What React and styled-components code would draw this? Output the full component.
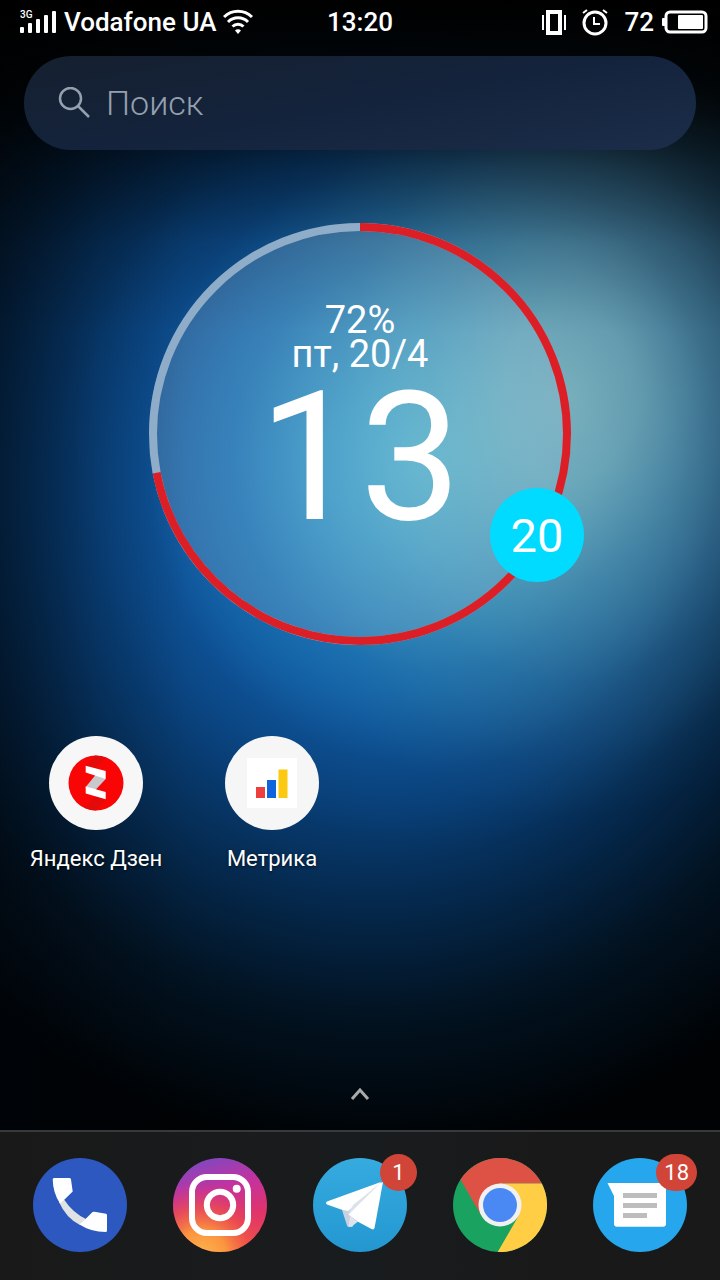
import styled, { createGlobalStyle } from "styled-components";

const GlobalStyle = createGlobalStyle`
  * {
    box-sizing: border-box;
  }

  body {
    margin: 0;
    background: #000;
    color: #fff;
    font-family: Roboto, "Liberation Sans", sans-serif;
  }
`;

const Screen = styled.div`
  display: flex;
  flex-direction: column;
  min-height: 100vh;
  background:
    linear-gradient(180deg, #000 0%, rgba(0, 0, 0, 0.8) 7%, rgba(0, 0, 0, 0.4) 13%, rgba(0, 0, 0, 0.12) 19%, transparent 26%),
    linear-gradient(90deg, rgba(0, 5, 12, 0.4) 0%, rgba(0, 5, 12, 0.12) 14%, transparent 26%),
    radial-gradient(ellipse 46% 33% at 79% 31%, rgba(148, 190, 188, 0.74) 0%, rgba(138, 184, 184, 0.68) 20%, rgba(115, 168, 172, 0.48) 42%, rgba(90, 145, 152, 0.22) 68%, rgba(80, 130, 135, 0.06) 88%, transparent 100%),
    radial-gradient(ellipse 50% 30% at 60% 36%, rgba(85, 195, 230, 0.95) 0%, rgba(65, 172, 218, 0.84) 25%, rgba(35, 132, 192, 0.55) 55%, rgba(20, 95, 165, 0.2) 80%, transparent 100%),
    radial-gradient(ellipse 86% 52% at 52% 38%, #1062b0 0%, #0d529a 30%, #083c72 49%, #042444 66%, #021220 80%, #000204 100%);
`;

const StatusBar = styled.header`
  display: grid;
  grid-template-columns: 1fr auto 1fr;
  align-items: center;
  height: 44px;
  font-size: 26px;
  font-weight: 500;
`;

const StatusGroup = styled.div`
  display: flex;
  align-items: center;
  justify-content: ${({ $end }) => ($end ? "flex-end" : "flex-start")};
  gap: ${({ $end }) => ($end ? "16px" : "7px")};
  padding: ${({ $end }) => ($end ? "0 12px 0 0" : "0 0 0 20px")};
`;

const Charge = styled.div`
  display: flex;
  align-items: center;
  gap: 8px;
`;

const SearchBar = styled.label`
  display: flex;
  align-items: center;
  gap: 16px;
  height: 94px;
  margin: 12px 24px 0;
  padding: 0 34px;
  border-radius: 47px;
  background: linear-gradient(170deg, #15202f 0%, #14233c 50%, #1b2d4a 100%);
`;

const SearchInput = styled.input`
  flex: 1;
  min-width: 0;
  padding: 0;
  border: 0;
  outline: 0;
  background: transparent;
  color: #fff;
  font: 300 34px Roboto, "Liberation Sans", sans-serif;

  &::placeholder {
    color: #95a0af;
    opacity: 1;
  }
`;

const Clock = styled.section`
  position: relative;
  display: flex;
  flex-direction: column;
  align-items: center;
  width: 422px;
  height: 422px;
  margin: 73px auto 0;
  padding-top: 80px;
  border-radius: 50%;
  background: radial-gradient(circle at 60% 50%, rgba(140, 205, 230, 0.22) 0%, rgba(150, 190, 215, 0.24) 50%, rgba(160, 180, 205, 0.27) 100%);
`;

const Ring = styled.svg`
  position: absolute;
  inset: 0;
`;

const ClockLine = styled.div`
  font-size: 38px;
  line-height: 34px;
`;

const Hours = styled.div`
  font-size: 180px;
  line-height: 174px;
`;

const Minutes = styled.div`
  position: absolute;
  right: -13px;
  bottom: 63px;
  display: flex;
  align-items: center;
  justify-content: center;
  width: 94px;
  height: 94px;
  border-radius: 50%;
  background: #00dbff;
  font-size: 47px;
`;

const AppGrid = styled.main`
  display: grid;
  grid-template-columns: repeat(4, 1fr);
  flex: 1;
  align-content: start;
  margin-top: 91px;
  padding: 0 8px;
`;

const AppLink = styled.a`
  display: flex;
  flex-direction: column;
  align-items: center;
  gap: 15px;
  color: #fff;
  font-size: 22px;
  line-height: 28px;
  text-decoration: none;
  text-shadow: 0 1px 3px rgba(0, 0, 0, 0.7);
`;

const IconBox = styled.span`
  position: relative;
  width: 94px;
  height: 94px;

  svg {
    display: block;
  }
`;

const DrawerButton = styled.button`
  align-self: center;
  display: flex;
  align-items: center;
  justify-content: center;
  width: 72px;
  height: 72px;
  padding: 0;
  border: 0;
  background: transparent;
`;

const Dock = styled.nav`
  display: grid;
  grid-template-columns: repeat(5, 1fr);
  height: 150px;
  padding: 26px 10px 0;
  border-top: 2px solid #363a3b;
  background: linear-gradient(90deg, #191919 0%, #191b1c 35%, #191c1e 50%, #191919 75%);
`;

const Badge = styled.span`
  position: absolute;
  top: -4px;
  right: -10px;
  min-width: 37px;
  height: 37px;
  padding: 0 8px;
  border-radius: 19px;
  background: #d04537;
  font-size: 22px;
  line-height: 37px;
  text-align: center;
  text-shadow: none;
`;

function SignalIcon() {
  return (
    <svg width="37" height="24" viewBox="0 0 37 24" fill="#fff">
      <text x="0" y="8" fontSize="10" fontFamily="Roboto, sans-serif">
        3G
      </text>
      <rect x="0" y="17" width="4" height="6" rx="1" />
      <rect x="8" y="13" width="4" height="10" rx="1" />
      <rect x="16" y="9" width="4" height="14" rx="1" />
      <rect x="24" y="5" width="4" height="18" rx="1" />
      <rect x="32" y="1" width="4" height="22" rx="1" />
    </svg>
  );
}

function WifiIcon() {
  return (
    <svg width="30" height="26" viewBox="0 0 30 26" fill="none" stroke="#fff" strokeWidth="3">
      <path d="M1 8a20 20 0 0 1 28 0" />
      <path d="M5 13a14 14 0 0 1 20 0" />
      <path d="M9.500 17.500a8 8 0 0 1 11 0" />
      <path d="M12 21.500a4 4 0 0 1 6 0L15 25z" fill="#fff" stroke="none" />
    </svg>
  );
}

function VibrateIcon() {
  return (
    <svg width="24" height="25" viewBox="0 0 24 25" fill="none" stroke="#fff">
      <rect x="6" y="2" width="12" height="21" strokeWidth="4" />
      <path d="M1 5v15M23 5v15" strokeWidth="2" />
    </svg>
  );
}

function AlarmIcon() {
  return (
    <svg width="26" height="27" viewBox="0 0 26 27" fill="none" stroke="#fff" strokeWidth="3">
      <circle cx="13" cy="14" r="11" />
      <path d="M12 8v7h6" strokeWidth="2" />
      <path d="M1 4l4-3M25 4l-4-3" strokeWidth="2" />
    </svg>
  );
}

function BatteryIcon() {
  return (
    <svg width="46" height="24" viewBox="0 0 46 24">
      <rect x="4" y="2" width="40" height="20" rx="4" fill="none" stroke="#fff" strokeWidth="3" />
      <rect x="0" y="8" width="4" height="8" rx="1" fill="#fff" />
      <rect x="16" y="5" width="25" height="14" rx="1" fill="#fff" />
    </svg>
  );
}

function SearchIcon() {
  return (
    <svg width="32" height="32" viewBox="0 0 32 32" fill="none" stroke="#95a0af" strokeWidth="2.500">
      <circle cx="12.500" cy="11.500" r="10.500" />
      <path d="M20 19L31 30" />
    </svg>
  );
}

function ZenIcon() {
  return (
    <svg width="94" height="94" viewBox="0 0 94 94">
      <circle cx="47" cy="47" r="47" fill="#f7f7f7" />
      <circle cx="47" cy="47" r="27.500" fill="#f90505" />
      <path d="M36.700 30L46 19.500Q52 20 57 21.500L46 32.500z" fill="#e30a0a" />
      <path d="M56.700 63L47 60.500L35 71.500Q41 74.500 47 74.500z" fill="#e30a0a" />
      <path d="M49 36L56.700 43L44.500 56L36.700 52V51z" fill="#c9c9cd" />
      <path d="M36.700 29.700L56.700 35V43L36.700 36.500z" fill="#fff" />
      <path d="M36.700 50.500L56.700 56V63.300L36.700 57.500z" fill="#fff" />
    </svg>
  );
}

function MetrikaIcon() {
  return (
    <svg width="94" height="94" viewBox="0 0 94 94">
      <circle cx="47" cy="47" r="47" fill="#f6f6f6" />
      <rect x="22" y="22" width="50" height="50" fill="#fff" />
      <rect x="31" y="51" width="9" height="11" fill="#ee3f3f" />
      <rect x="42" y="44" width="9" height="18" fill="#0f63dc" />
      <rect x="53.500" y="33.500" width="9" height="28.500" fill="#fbc90f" />
    </svg>
  );
}

function PhoneIcon() {
  return (
    <svg width="94" height="94" viewBox="0 0 94 94">
      <circle cx="47" cy="47" r="47" fill="#2d58bf" />
      <path d="M26 44L31 41.500Q40 55 53 61L47 67Q33 60 26 44z" fill="#dfe3e4" />
      <path d="M21 20H36.500Q38 20 38 21.500L39.700 33.500L31.500 41.500L27 45.500Q20 35 19.700 21.500Q19.700 20 21 20z" fill="#fff" />
      <path d="M52 61.500L59.500 54Q60.300 53.500 61.500 53.700L73 55.700Q74 56 74 57V72.500Q74 74 72.500 74Q58 74 46.500 66.500z" fill="#fff" />
    </svg>
  );
}

function InstagramIcon() {
  return (
    <svg width="94" height="94" viewBox="0 0 94 94">
      <defs>
        <linearGradient id="insta-base" x1="0.300" y1="0" x2="0.600" y2="1">
          <stop offset="0" stopColor="#7f48c0" />
          <stop offset="0.350" stopColor="#c332a0" />
          <stop offset="0.700" stopColor="#e0336a" />
          <stop offset="1" stopColor="#ee4a50" />
        </linearGradient>
        <radialGradient id="insta-glow" cx="0.300" cy="1.050" r="0.800">
          <stop offset="0" stopColor="#fdb84e" />
          <stop offset="0.350" stopColor="#fb953f" />
          <stop offset="0.650" stopColor="#f05546" stopOpacity="0.700" />
          <stop offset="1" stopColor="#e0336a" stopOpacity="0" />
        </radialGradient>
      </defs>
      <circle cx="47" cy="47" r="47" fill="url(#insta-base)" />
      <circle cx="47" cy="47" r="47" fill="url(#insta-glow)" />
      <g fill="none" stroke="#fff" strokeWidth="6">
        <rect x="19" y="19" width="56" height="56" rx="15" />
        <circle cx="47" cy="47" r="13.200" />
      </g>
      <circle cx="63.700" cy="30.700" r="4" fill="#fff" />
    </svg>
  );
}

function TelegramIcon() {
  return (
    <svg width="94" height="94" viewBox="0 0 94 94">
      <defs>
        <linearGradient id="telegram-sky" x1="0" y1="0" x2="0" y2="1">
          <stop offset="0" stopColor="#35abe0" />
          <stop offset="1" stopColor="#2497d0" />
        </linearGradient>
      </defs>
      <circle cx="47" cy="47" r="47" fill="url(#telegram-sky)" />
      <path d="M28.700 51L68 24.500L41 54L39.700 68.700H35.500Q34.300 68.700 34 67.500z" fill="#c9d0df" />
      <path d="M14 43.500L68.500 23.800L35 53L28 51.500L14 46.500Q12 45 14 43.500z" fill="#fff" />
      <path d="M70 24L61.500 70Q60.800 72.200 58.500 71L44.500 63.500L35.500 56.500L66 25.500z" fill="#fff" />
      <path d="M37 58L45 63.500L38.500 68.700H35.500z" fill="#dfe4ec" />
      <path d="M67 25.500L40 47L35 56.500z" fill="#dde2ea" />
    </svg>
  );
}

function ChromeIcon() {
  return (
    <svg width="94" height="94" viewBox="0 0 94 94">
      <circle cx="47" cy="47" r="47" fill="#1aa260" />
      <path d="M47 25.500H88.800A47 47 0 0 0 7.500 21.500L28.400 57.800L47 47z" fill="#de5246" />
      <path d="M47 25.500H88.800A47 47 0 0 1 44.700 94L65.600 57.800L47 47z" fill="#ffce44" />
      <circle cx="47" cy="47" r="21.500" fill="#f1f1f1" />
      <circle cx="47" cy="47" r="17" fill="#4a89f3" />
    </svg>
  );
}

function MessagesIcon() {
  return (
    <svg width="94" height="94" viewBox="0 0 94 94">
      <circle cx="47" cy="47" r="47" fill="#26a6ec" />
      <path d="M14.500 25H70Q73 25 73 28V65.500Q73 68.700 70 68.700H24Q21 68.700 21 65.500V38z" fill="#fff" />
      <path d="M30 35h34v5H30zM30 45h34v5H30zM30 55h24v5H30z" fill="#bdbdbd" />
    </svg>
  );
}

const apps = [
  { name: "Яндекс Дзен", Icon: ZenIcon },
  { name: "Метрика", Icon: MetrikaIcon },
];

const dockApps = [
  { name: "Телефон", Icon: PhoneIcon },
  { name: "Instagram", Icon: InstagramIcon },
  { name: "Telegram", Icon: TelegramIcon, badge: 1 },
  { name: "Chrome", Icon: ChromeIcon },
  { name: "Сообщения", Icon: MessagesIcon, badge: 18 },
];

function ClockWidget({ battery, date, hours, minutes }) {
  return (
    <Clock>
      <Ring viewBox="0 0 422 422" fill="none" strokeWidth="8">
        <circle cx="211" cy="211" r="207" stroke="#8fadc8" />
        <circle
          cx="211"
          cy="211"
          r="207"
          stroke="#dc1f26"
          pathLength="100"
          strokeDasharray={`${battery} 100`}
          transform="rotate(-90 211 211)"
        />
      </Ring>
      <ClockLine>{battery}%</ClockLine>
      <ClockLine>{date}</ClockLine>
      <Hours>{hours}</Hours>
      <Minutes>{minutes}</Minutes>
    </Clock>
  );
}

export default function App() {
  return (
    <Screen>
      <GlobalStyle />
      <StatusBar>
        <StatusGroup>
          <SignalIcon />
          <span>Vodafone UA</span>
          <WifiIcon />
        </StatusGroup>
        <span>13:20</span>
        <StatusGroup $end>
          <VibrateIcon />
          <AlarmIcon />
          <Charge>
            <span>72</span>
            <BatteryIcon />
          </Charge>
        </StatusGroup>
      </StatusBar>
      <SearchBar>
        <SearchIcon />
        <SearchInput type="text" placeholder="Поиск" aria-label="Поиск" />
      </SearchBar>
      <ClockWidget battery={72} date="пт, 20/4" hours="13" minutes="20" />
      <AppGrid>
        {apps.map(({ name, Icon }) => (
          <AppLink key={name} href="#">
            <IconBox>
              <Icon />
            </IconBox>
            {name}
          </AppLink>
        ))}
      </AppGrid>
      <DrawerButton aria-label="Все приложения">
        <svg width="20" height="14" viewBox="0 0 20 14" fill="none" stroke="#aaa" strokeWidth="3">
          <path d="M2 12L10 3L18 12" />
        </svg>
      </DrawerButton>
      <Dock>
        {dockApps.map(({ name, Icon, badge }) => (
          <AppLink key={name} href="#" aria-label={name}>
            <IconBox>
              <Icon />
              {badge && <Badge>{badge}</Badge>}
            </IconBox>
          </AppLink>
        ))}
      </Dock>
    </Screen>
  );
}
